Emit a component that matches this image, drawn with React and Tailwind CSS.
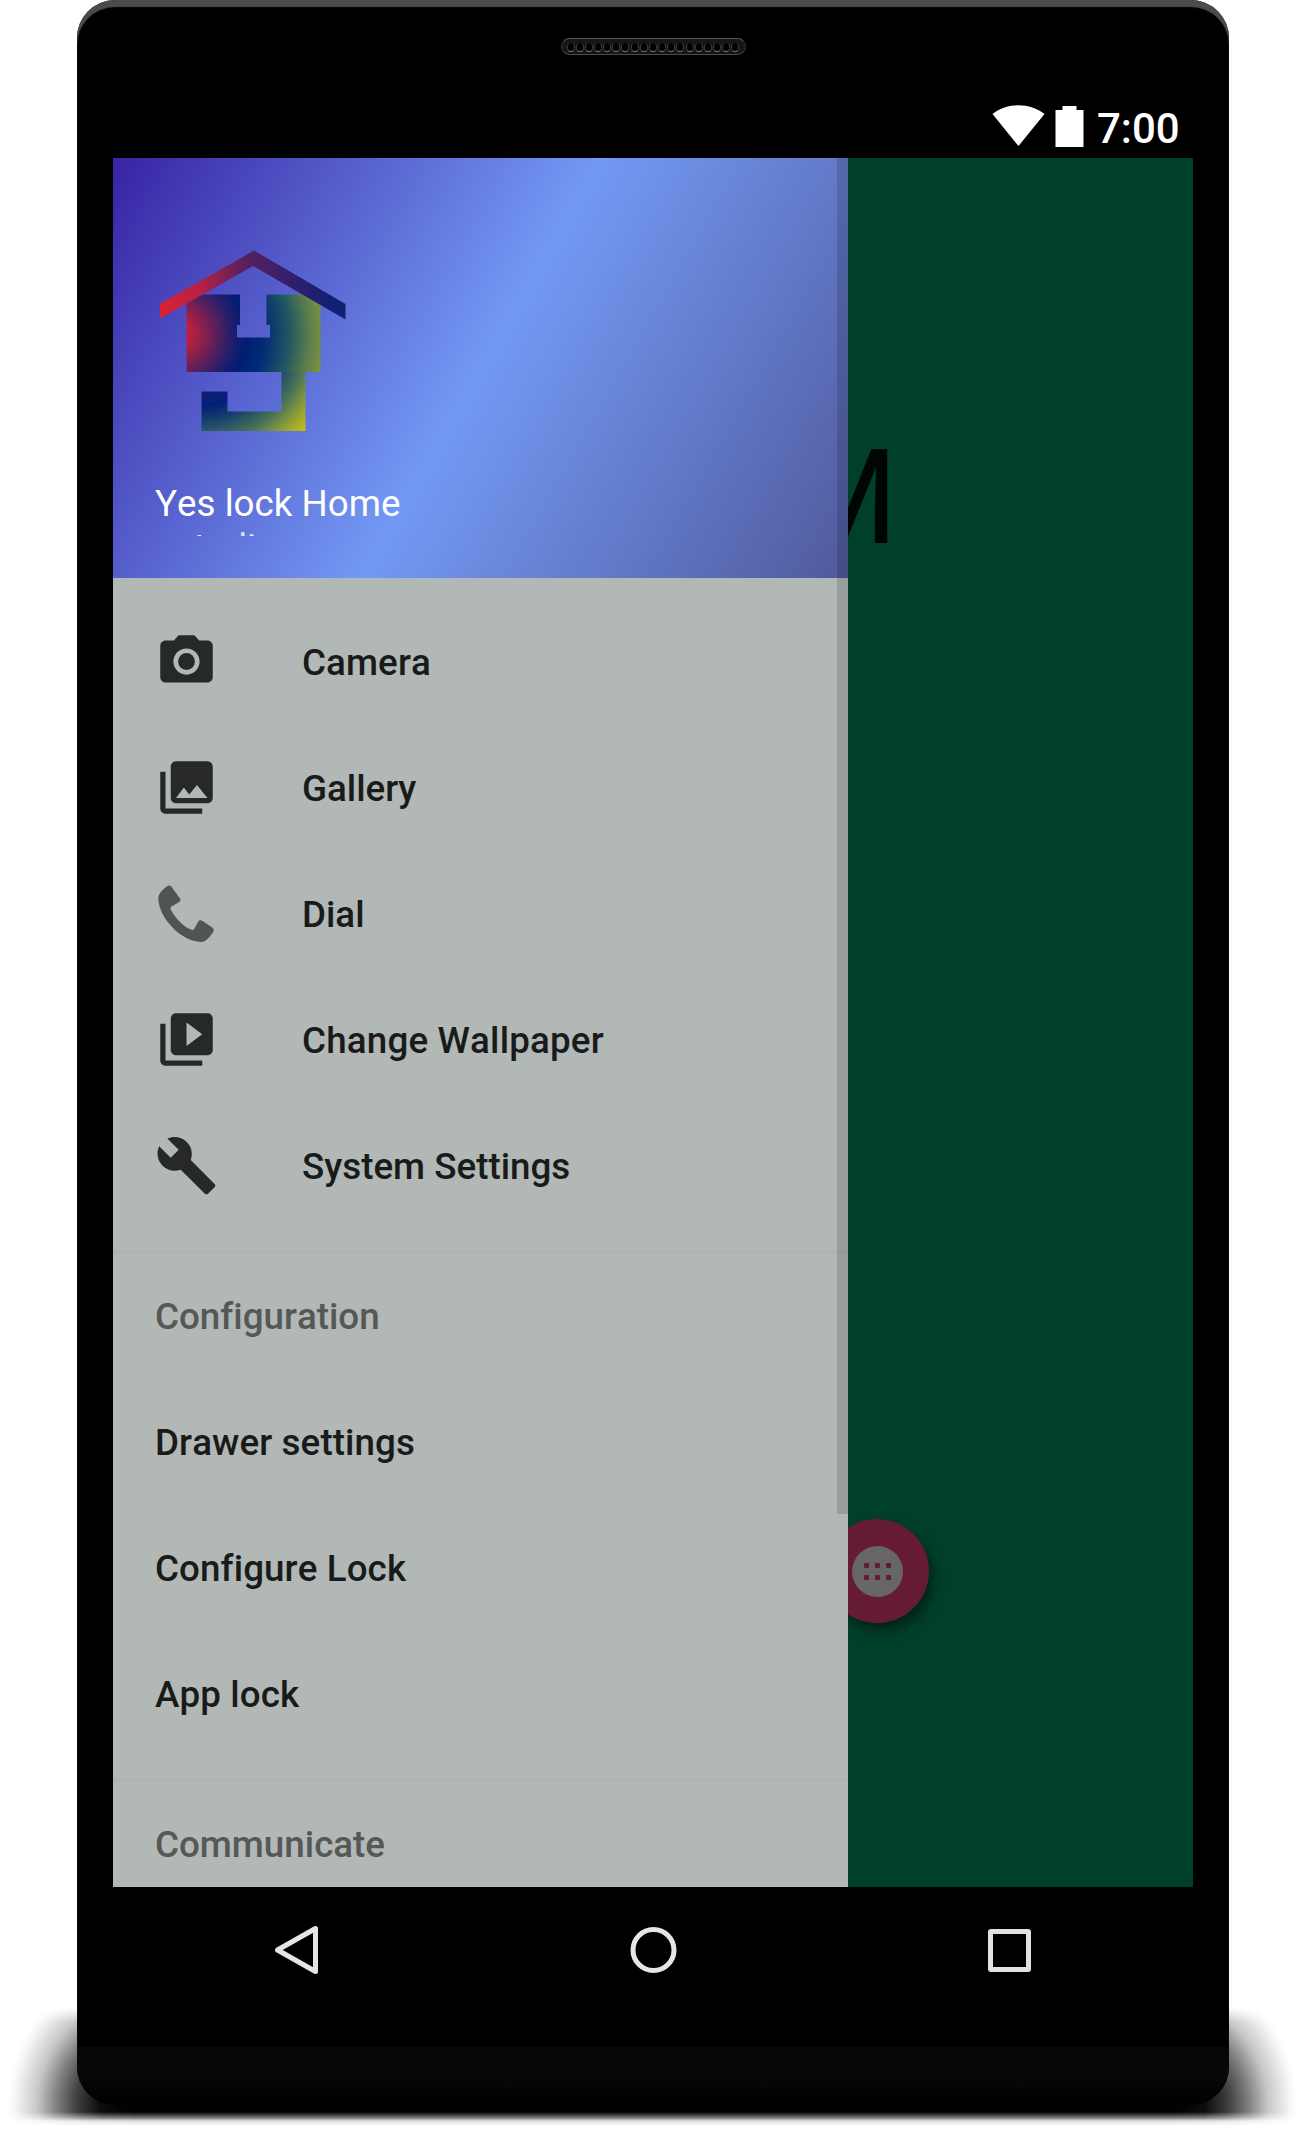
import { MdCameraAlt, MdPhotoLibrary, MdVideoLibrary, MdBuild } from "react-icons/md";

function DialIcon() {
  return (
    <svg className="h-[63px] w-[63px] text-[#515453]" viewBox="0 0 63 63" fill="currentColor">
      <path d="M3.3 16.5C3.2 11.5 8.6 6.4 13.2 3.7Q15.2 3 16.3 4.6L25.2 16.8Q26.3 18.8 24.3 20.1L16.2 24.7Q14.8 25.7 15.8 27.8C20 36 29 45.5 37.3 48Q38.6 48.2 39.3 46.8L43.3 39.4Q44.6 37.4 46.8 38.6L57.6 45.8Q59.7 47.4 58.4 49.4C55 54.5 51.5 59.7 46 59.9C26 59.5 4 36 3.3 16.5Z" />
    </svg>
  );
}

const shortcuts = [
  { label: "Camera", tracking: "tracking-[0.1px]", icon: <MdCameraAlt className="h-[63px] w-[63px]" /> },
  { label: "Gallery", tracking: "tracking-normal", icon: <MdPhotoLibrary className="h-[63px] w-[63px]" /> },
  { label: "Dial", tracking: "tracking-normal", icon: <DialIcon /> },
  { label: "Change Wallpaper", tracking: "tracking-[0.18px]", icon: <MdVideoLibrary className="h-[63px] w-[63px]" /> },
  { label: "System Settings", tracking: "tracking-normal", icon: <MdBuild className="h-[63px] w-[63px]" /> },
];

const configuration = ["Drawer settings", "Configure Lock", "App lock"];

function Logo() {
  return (
    <svg className="-ml-[2px] h-[190px] w-[195px] shrink-0" viewBox="153 246 195 190">
      <defs>
        <linearGradient id="roof" gradientUnits="userSpaceOnUse" x1="160" y1="315" x2="330" y2="290">
          <stop offset="0" stopColor="#dc2135" />
          <stop offset="0.25" stopColor="#b82045" />
          <stop offset="0.52" stopColor="#5a205e" />
          <stop offset="0.8" stopColor="#301f6c" />
          <stop offset="1" stopColor="#102073" />
        </linearGradient>
        <radialGradient id="walls" gradientUnits="userSpaceOnUse" cx="176" cy="334" r="152">
          <stop offset="0" stopColor="#d0203a" />
          <stop offset="0.1" stopColor="#b8203f" />
          <stop offset="0.2" stopColor="#80204f" />
          <stop offset="0.36" stopColor="#251e6c" />
          <stop offset="0.46" stopColor="#001d73" />
          <stop offset="0.58" stopColor="#002b75" />
          <stop offset="0.75" stopColor="#235862" />
          <stop offset="0.88" stopColor="#5d7f4c" />
          <stop offset="1" stopColor="#84973a" />
        </radialGradient>
        <radialGradient id="hook" gradientUnits="userSpaceOnUse" cx="200" cy="335" r="142">
          <stop offset="0.4" stopColor="#151e74" />
          <stop offset="0.5" stopColor="#00207a" />
          <stop offset="0.6" stopColor="#153f6c" />
          <stop offset="0.75" stopColor="#48705a" />
          <stop offset="0.88" stopColor="#8e9d38" />
          <stop offset="1" stopColor="#c6c116" />
        </radialGradient>
      </defs>
      <path fill="url(#walls)" d="M186.500 303L202 294.500H240V325H237V337.500H270V325H266.500V294.500H304L320.500 304V372H186.500Z" />
      <path fill="url(#hook)" d="M281.500 371.500H305.500V431H201.500V391.500H227.500V411.500H281.500Z" />
      <path fill="url(#roof)" d="M160 304L254 250.500L345.500 304V319.500L253 266L160 318.500Z" />
    </svg>
  );
}

function DrawerHeader() {
  return (
    <header className="flex h-[420px] shrink-0 flex-col bg-[linear-gradient(119.74deg,#3824a4_0%,#7399f4_50%,#505a9c_100%)] px-[42px] pt-[88px]">
      <Logo />
      <div className="mt-[46px] h-[54px] overflow-hidden whitespace-nowrap text-[36.75px] font-normal leading-[43px] text-white">
        <div>Yes lock Home</div>
        <div className="mt-[1px] text-[#dfe4fa]">astudio</div>
      </div>
    </header>
  );
}

function Drawer() {
  return (
    <aside className="relative flex h-[1729px] w-[735px] flex-col overflow-hidden bg-[#b1b8b6] text-[36.75px] font-medium text-[#191b1a]">
      <DrawerHeader />
      <nav className="flex flex-col pt-[21px]">
        {shortcuts.map(({ label, tracking, icon }) => (
          <div key={label} className="flex h-[126px] items-center gap-[84px] px-[42px]">
            <span className="-mt-[1px] text-[#272928]">{icon}</span>
            <span className={`pt-[2px] ${tracking}`}>{label}</span>
          </div>
        ))}
        <div className="mt-[21px] h-[3px] bg-[#aeb4b2]" />
        <div className="flex h-[126px] items-center px-[42px] pt-[2px] text-[#555857]">Configuration</div>
        {configuration.map((label) => (
          <div key={label} className="flex h-[126px] items-center px-[42px] pt-[2px] tracking-[0.1px]">{label}</div>
        ))}
        <div className="mt-[21px] h-[3px] bg-[#aeb4b2]" />
        <div className="flex h-[126px] items-center px-[42px] pt-[2px] text-[#555857]">Communicate</div>
      </nav>
      <div className="absolute right-0 top-0 h-[1356px] w-[11px] bg-black/14" />
    </aside>
  );
}

function Fab() {
  return (
    <div className="flex h-[104px] w-[104px] items-center justify-center rounded-full bg-[#651b33] shadow-[4px_8px_12px_rgba(0,0,0,0.42)]">
      <div className="grid h-[51px] w-[51px] grid-cols-3 content-center justify-center gap-x-[6px] gap-y-[7px] rounded-full bg-[#666666] px-[12px]">
        {[0, 1, 2, 3, 4, 5].map((dot) => (
          <span key={dot} className="h-[5px] w-[5px] rounded-[1px] bg-[#651b33]" />
        ))}
      </div>
    </div>
  );
}

function StatusBar() {
  return (
    <div className="flex h-[63px] items-start justify-end pr-[13px] text-white">
      <svg className="mt-[10px] h-[42px] w-[53px]" viewBox="0 0 53 42" fill="currentColor">
        <path d="M0.500 9C15 -2.700 38 -2.700 52.500 9L26.500 41Z" />
      </svg>
      <svg className="ml-[10px] mt-[10px] h-[42px] w-[29px]" viewBox="0 0 29 42" fill="currentColor">
        <path d="M7.500 1H21.500V5H28.500V42H0.500V5H7.500Z" />
      </svg>
      <span className="ml-[13px] mt-[10px] w-[83px] whitespace-nowrap text-[42px] font-medium leading-[48px]">7:00</span>
    </div>
  );
}

function NavigationBar() {
  return (
    <div className="grid h-[126px] grid-cols-3 items-center text-[#e6e6e6]">
      <svg className="ml-[159px] h-[54px] w-[48px]" viewBox="0 0 48 54" fill="none" stroke="currentColor" strokeWidth="5" strokeLinejoin="round">
        <path d="M43.500 5.500V48.500L5.500 27Z" />
      </svg>
      <svg className="mx-auto h-[48px] w-[48px]" viewBox="0 0 48 48" fill="none" stroke="currentColor" strokeWidth="5">
        <circle cx="24.500" cy="24" r="20.500" />
      </svg>
      <span className="ml-[155px] h-[43px] w-[43px] rounded-[3px] border-[5px] border-[#e2e2e2]" />
    </div>
  );
}

function Speaker() {
  return (
    <div className="mx-auto flex h-[17px] w-[185px] items-center justify-between rounded-full border border-[#333] border-t-[#555] border-b-[#4a4a4a] bg-[#161616] px-[5px] pt-[2px]">
      {Array.from({ length: 19 }, (_, hole) => (
        <span key={hole} className="h-[9px] w-[8px] rounded-full border border-t-0 border-[#3c3c3c] border-b-[#777] bg-black" />
      ))}
    </div>
  );
}

function GroundShadow() {
  return (
    <div className="absolute left-0 top-[2000px] flex h-[130px] w-[1305px] [mask-image:linear-gradient(transparent_6px,#000_22px,#000_112px,rgba(0,0,0,0.5)_118px,rgba(0,0,0,0.12)_121px,transparent_126px)]">
      <div className="w-[130px] bg-[radial-gradient(122px_135px_at_130px_105px,#000_0%,rgba(0,0,0,0.95)_25%,rgba(0,0,0,0.75)_44%,rgba(0,0,0,0.5)_60%,rgba(0,0,0,0.22)_76%,rgba(0,0,0,0.04)_94%,transparent_100%)]" />
      <div className="mt-[40px] flex-1 bg-black" />
      <div className="w-[130px] bg-[radial-gradient(122px_135px_at_0px_105px,#000_0%,rgba(0,0,0,0.95)_25%,rgba(0,0,0,0.75)_44%,rgba(0,0,0,0.5)_60%,rgba(0,0,0,0.22)_76%,rgba(0,0,0,0.04)_94%,transparent_100%)]" />
    </div>
  );
}

export default function App() {
  return (
    <main className="relative h-[2130px] w-[1305px] overflow-hidden bg-white font-['Roboto',sans-serif] [font-kerning:none] [font-variant-ligatures:none]">
      <GroundShadow />
      <div className="relative mr-[76px] ml-[77px] flex h-[2105px] flex-col rounded-[38px] bg-black shadow-[inset_0_7px_1px_#4b4b4b]">
        <div className="h-[95px] pt-[38px]">
          <Speaker />
        </div>
        <div className="mx-[36px] flex flex-col">
          <StatusBar />
          <div className="relative flex h-[1729px] overflow-hidden bg-[#003f28]">
            <span className="absolute right-[295px] top-[263px] text-[131.25px] leading-[154px] text-[#000603]">M</span>
            <div className="absolute left-[712px] top-[1361px]">
              <Fab />
            </div>
            <Drawer />
          </div>
          <NavigationBar />
        </div>
        <div className="mt-[34px] h-[58px] rounded-b-[38px] bg-[linear-gradient(#070707,#080808_50%,#000)]" />
      </div>
    </main>
  );
}
